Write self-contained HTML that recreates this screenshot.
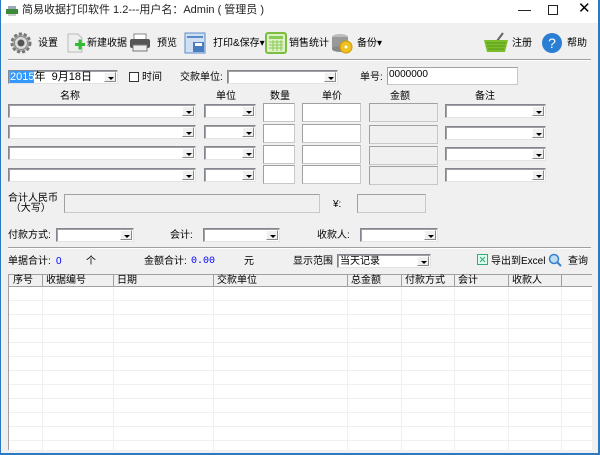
<!DOCTYPE html>
<html><head><meta charset="utf-8"><style>
*{margin:0;padding:0;box-sizing:border-box}
body{width:600px;height:455px;overflow:hidden;background:#f0f0f0;font-family:"Liberation Sans","Noto Sans CJK SC",sans-serif;font-size:10px;color:#000;position:relative}
.a{position:absolute;white-space:nowrap;line-height:13px}
.cb{position:absolute;background:#fff;border:1px solid #828790;border-right-color:#e3e3e3;border-bottom-color:#e3e3e3;box-shadow:inset 1px 1px 0 #a0a0a0}
.cb .btn{position:absolute;right:1px;top:1px;bottom:1px;width:12px;background:#f0f0f0;border:1px solid #fff;border-right-color:#888;border-bottom-color:#888}
.cb .btn:after{content:"";position:absolute;left:3px;top:4px;border-left:3px solid transparent;border-right:3px solid transparent;border-top:3px solid #000}
.tb{position:absolute;background:#fff;border:1px solid #c8c8c8;border-top-color:#a0a0a0;border-left-color:#a0a0a0}
.gb{position:absolute;background:#f0f0f0;border:1px solid #c8c8c8;border-top-color:#a0a0a0;border-left-color:#a0a0a0}
.blue{color:#0000ff}
</style></head><body>
<div style="position:absolute;left:0;top:0;width:600px;height:23px;background:#fff"></div>
<div style="position:absolute;left:0;top:0;width:1px;height:455px;background:#2b79c3"></div>
<div style="position:absolute;right:0;top:0;width:2px;height:455px;background:#2b79c3"></div>
<div style="position:absolute;left:0;bottom:0;width:600px;height:2px;background:#2b79c3"></div>
<svg class="a" style="left:6px;top:5px" width="12" height="12"><rect x="2" y="1" width="8" height="3" fill="#9ab"/><rect x="0" y="4" width="12" height="5" fill="#3a8a3a"/><rect x="2" y="9" width="8" height="2" fill="#ccc"/></svg>
<div class="a" style="left:22px;top:4px;font-size:11px;color:#222">简易收据打印软件 1.2---用户名：Admin ( 管理员 )</div>
<div class="a" style="left:518px;top:3px;font-size:13px">—</div>
<div style="position:absolute;left:548px;top:5px;width:10px;height:10px;border:1px solid #222"></div>
<div class="a" style="left:578px;top:2px;font-size:15px">✕</div>
<svg class="a" style="left:10px;top:32px" width="22" height="22" viewBox="0 0 22 22"><circle cx="11" cy="11" r="9" fill="#bbb" stroke="#777" stroke-dasharray="3 2" stroke-width="3"/><circle cx="11" cy="11" r="6.5" fill="#ddd" stroke="#888"/><circle cx="11" cy="11" r="3.5" fill="#555"/></svg>
<div class="a" style="left:38px;top:37px">设置</div>
<svg class="a" style="left:67px;top:30px" width="20" height="24"><path d="M1 4h10l4 4v14H1z" fill="#eee" stroke="#bbb"/><rect x="8" y="13" width="10" height="3" fill="#3b3"/><rect x="11.5" y="9.5" width="3" height="10" fill="#3b3"/></svg>
<div class="a" style="left:87px;top:37px">新建收据</div>
<svg class="a" style="left:130px;top:33px" width="20" height="20"><rect x="4" y="1" width="12" height="6" fill="#fff" stroke="#888"/><rect x="0" y="6" width="20" height="9" rx="2" fill="#555"/><rect x="3" y="12" width="14" height="6" fill="#eee" stroke="#777"/></svg>
<div class="a" style="left:157px;top:37px">预览</div>
<svg class="a" style="left:184px;top:32px" width="22" height="22"><rect x="1" y="1" width="20" height="20" fill="#cfe0f3" stroke="#5a8bc9"/><rect x="3" y="4" width="16" height="2" fill="#5a8bc9"/><rect x="9" y="10" width="11" height="10" fill="#4a7cc0"/><rect x="11" y="11" width="7" height="3" fill="#fff"/></svg>
<div class="a" style="left:213px;top:37px">打印&amp;保存▾</div>
<svg class="a" style="left:265px;top:32px" width="22" height="22"><rect x="1" y="1" width="20" height="20" rx="2" fill="#dff0c8" stroke="#7cbf40" stroke-width="2"/><rect x="4" y="4" width="14" height="3" fill="#8c5"/><path d="M4 10h14M4 13h14M4 16h14M8 8v11M12 8v11M16 8v11" stroke="#8c5"/></svg>
<div class="a" style="left:289px;top:37px">销售统计</div>
<svg class="a" style="left:331px;top:32px" width="22" height="22"><ellipse cx="9" cy="5" rx="8" ry="3" fill="#bbb"/><rect x="1" y="5" width="16" height="12" fill="#999"/><ellipse cx="9" cy="17" rx="8" ry="3" fill="#888"/><circle cx="15" cy="15" r="6" fill="#f0c020" stroke="#c90"/><circle cx="15" cy="15" r="1.5" fill="#fff"/></svg>
<div class="a" style="left:357px;top:37px">备份▾</div>
<svg class="a" style="left:483px;top:31px" width="26" height="22"><path d="M14 10l6-8" stroke="#666" stroke-width="2"/><path d="M1 9h24l-3 12H4z" fill="#7bbd2a"/><path d="M3 12h20M4 15h18M5 18h16" stroke="#5a9a18"/></svg>
<div class="a" style="left:512px;top:37px">注册</div>
<svg class="a" style="left:541px;top:32px" width="22" height="22"><circle cx="11" cy="11" r="10" fill="#2a7fd4"/><text x="11" y="16" font-size="14" fill="#fff" text-anchor="middle" font-family="Liberation Sans">?</text></svg>
<div class="a" style="left:567px;top:37px">帮助</div>
<div style="position:absolute;left:8px;top:59px;width:583px;height:1px;background:#a0a0a0"></div>
<div style="position:absolute;left:8px;top:60px;width:583px;height:1px;background:#fff"></div>
<div class="cb" style="left:8px;top:70px;width:110px;height:14px"><span class="a" style="left:1px;top:0;font-size:11px"><span style="background:#3399ff;color:#fff">2015</span>年&nbsp; 9月18日</span><div class="btn"></div></div>
<div style="position:absolute;left:129px;top:72px;width:10px;height:10px;border:1px solid #333;background:#fff"></div>
<div class="a" style="left:142px;top:71px">时间</div>
<div class="a" style="left:180px;top:71px">交款单位:</div>
<div class="cb" style="left:227px;top:70px;width:111px;height:14px"><div class="btn"></div></div>
<div class="a" style="left:360px;top:71px">单号:</div>
<div class="tb" style="left:387px;top:67px;width:131px;height:18px"><span class="a" style="left:1px;top:0">0000000</span></div>
<div class="a" style="left:60px;top:90px">名称</div>
<div class="a" style="left:216px;top:90px">单位</div>
<div class="a" style="left:270px;top:90px">数量</div>
<div class="a" style="left:322px;top:90px">单价</div>
<div class="a" style="left:390px;top:90px">金额</div>
<div class="a" style="left:475px;top:90px">备注</div>
<div class="cb" style="left:8px;top:104px;width:188px;height:14px"><div class="btn"></div></div>
<div class="cb" style="left:204px;top:104px;width:52px;height:14px"><div class="btn"></div></div>
<div class="tb" style="left:263px;top:103px;width:32px;height:19px"></div>
<div class="tb" style="left:302px;top:103px;width:59px;height:19px"></div>
<div class="gb" style="left:369px;top:103px;width:69px;height:19px"></div>
<div class="cb" style="left:445px;top:104px;width:101px;height:14px"><div class="btn"></div></div>
<div class="cb" style="left:8px;top:125px;width:188px;height:14px"><div class="btn"></div></div>
<div class="cb" style="left:204px;top:125px;width:52px;height:14px"><div class="btn"></div></div>
<div class="tb" style="left:263px;top:124px;width:32px;height:19px"></div>
<div class="tb" style="left:302px;top:124px;width:59px;height:19px"></div>
<div class="gb" style="left:369px;top:125px;width:69px;height:19px"></div>
<div class="cb" style="left:445px;top:126px;width:101px;height:14px"><div class="btn"></div></div>
<div class="cb" style="left:8px;top:146px;width:188px;height:14px"><div class="btn"></div></div>
<div class="cb" style="left:204px;top:146px;width:52px;height:14px"><div class="btn"></div></div>
<div class="tb" style="left:263px;top:145px;width:32px;height:19px"></div>
<div class="tb" style="left:302px;top:145px;width:59px;height:19px"></div>
<div class="gb" style="left:369px;top:146px;width:69px;height:19px"></div>
<div class="cb" style="left:445px;top:147px;width:101px;height:14px"><div class="btn"></div></div>
<div class="cb" style="left:8px;top:168px;width:188px;height:14px"><div class="btn"></div></div>
<div class="cb" style="left:204px;top:168px;width:52px;height:14px"><div class="btn"></div></div>
<div class="tb" style="left:263px;top:165px;width:32px;height:19px"></div>
<div class="tb" style="left:302px;top:165px;width:59px;height:19px"></div>
<div class="gb" style="left:369px;top:166px;width:69px;height:19px"></div>
<div class="cb" style="left:445px;top:168px;width:101px;height:14px"><div class="btn"></div></div>
<div class="a" style="left:8px;top:194px;font-size:10px;line-height:10px">合计人民币<br>&nbsp;（大写）</div>
<div class="gb" style="left:64px;top:194px;width:256px;height:19px"></div>
<div class="a" style="left:333px;top:198px">¥:</div>
<div class="gb" style="left:357px;top:194px;width:69px;height:19px"></div>
<div class="a" style="left:8px;top:229px">付款方式:</div>
<div class="cb" style="left:56px;top:228px;width:78px;height:14px"><div class="btn"></div></div>
<div class="a" style="left:170px;top:229px">会计:</div>
<div class="cb" style="left:203px;top:228px;width:77px;height:14px"><div class="btn"></div></div>
<div class="a" style="left:317px;top:229px">收款人:</div>
<div class="cb" style="left:360px;top:228px;width:78px;height:14px"><div class="btn"></div></div>
<div style="position:absolute;left:8px;top:247px;width:583px;height:1px;background:#a0a0a0"></div>
<div style="position:absolute;left:8px;top:248px;width:583px;height:1px;background:#fff"></div>
<div class="a" style="left:8px;top:255px">单据合计:</div>
<div class="a blue" style="left:56px;top:255px">0</div>
<div class="a" style="left:86px;top:255px">个</div>
<div class="a" style="left:144px;top:255px">金额合计:</div>
<div class="a blue" style="left:191px;top:255px;font-family:'Liberation Mono',monospace">0.00</div>
<div class="a" style="left:244px;top:255px">元</div>
<div class="a" style="left:293px;top:255px">显示范围</div>
<div class="cb" style="left:337px;top:254px;width:94px;height:14px"><span class="a" style="left:2px;top:0">当天记录</span><div class="btn"></div></div>
<svg class="a" style="left:477px;top:254px" width="11" height="11"><rect x="0.5" y="0.5" width="10" height="10" fill="#dfe" stroke="#3a7"/><path d="M3 3l5 5M8 3l-5 5" stroke="#3a7"/></svg>
<div class="a" style="left:491px;top:255px">导出到Excel</div>
<svg class="a" style="left:548px;top:253px" width="14" height="14"><circle cx="6" cy="6" r="4.5" fill="#bde" stroke="#3a7fd0" stroke-width="1.5"/><path d="M9 9l4 4" stroke="#3a7fd0" stroke-width="2"/></svg>
<div class="a" style="left:568px;top:255px">查询</div>
<div style="position:absolute;left:8px;top:274px;width:584px;height:176px;background:#fff;border-left:1px solid #a0a0a0;border-top:1px solid #a0a0a0;background-image:repeating-linear-gradient(to bottom,transparent 0 13px,#f0f0f0 13px 14px);background-position:0 12px"></div>
<div style="position:absolute;left:9px;top:275px;width:583px;height:12px;background:#f0f0f0;border-bottom:1px solid #a0a0a0"></div>
<svg class="a" style="left:8px;top:275px" width="584" height="175">
<g stroke="#f0f0f0"><path d="M34.5 12V175M105.5 12V175M205.5 12V175M339.5 12V175M393.5 12V175M446.5 12V175M500.5 12V175M553.5 12V175"/></g>
<g stroke="#a0a0a0"><path d="M34.5 0V12M105.5 0V12M205.5 0V12M339.5 0V12M393.5 0V12M446.5 0V12M500.5 0V12M553.5 0V12"/></g>
</svg>
<div class="a" style="left:13px;top:274px">序号</div>
<div class="a" style="left:46px;top:274px">收据编号</div>
<div class="a" style="left:117px;top:274px">日期</div>
<div class="a" style="left:217px;top:274px">交款单位</div>
<div class="a" style="left:351px;top:274px">总金额</div>
<div class="a" style="left:405px;top:274px">付款方式</div>
<div class="a" style="left:458px;top:274px">会计</div>
<div class="a" style="left:512px;top:274px">收款人</div>
</body></html>
